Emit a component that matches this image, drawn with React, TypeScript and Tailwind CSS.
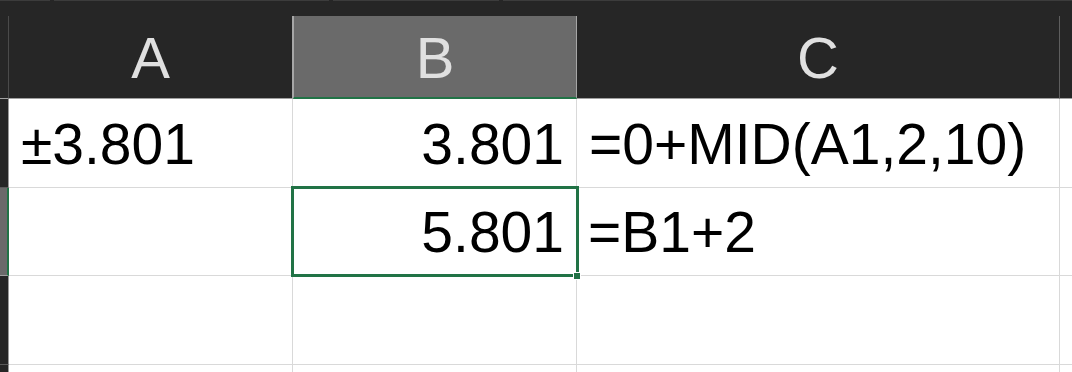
import React from "react";

const font = { fontFamily: '"Liberation Sans", Arial, sans-serif' };

const HeaderCell = ({
  label,
  selected,
  className = "",
}: {
  label: string;
  selected?: boolean;
  className?: string;
}) => (
  <div
    className={`flex items-center justify-center text-[58px] leading-none text-[#e0e0e0] border-b ${
      selected
        ? "bg-[#6a6a6a] border-b-2 border-b-[#217346] border-r border-r-[#a6a6a6] border-l border-l-[#a6a6a6] -ml-px"
        : "bg-[#262626] border-b-[#a0a0a0]"
    } ${className}`}
  >
    <span className="pt-[2px]">{label}</span>
  </div>
);

const Cell = ({
  children,
  align = "left",
  className = "",
}: {
  children?: React.ReactNode;
  align?: "left" | "right";
  className?: string;
}) => (
  <div
    className={`relative flex items-end px-3 pb-[14px] text-[57px] leading-none text-black bg-white border-r border-b border-[#d9d9d9] whitespace-nowrap ${
      align === "right" ? "justify-end" : "justify-start"
    } ${className}`}
  >
    {children}
  </div>
);

const RowHead = ({ selected }: { selected?: boolean }) => (
  <div
    className={`border-b ${
      selected
        ? "bg-[#6a6a6a] border-r-2 border-r-[#217346] border-b-[#a0a0a0]"
        : "bg-[#262626] border-r border-r-[#9a9a9a] border-b-[#5a5a5a]"
    }`}
  />
);

export default function App() {
  return (
    <div className="w-[1072px] h-[372px] overflow-hidden bg-white" style={font}>
      {/* strip above the headers */}
      <div className="h-[16px] bg-[#262626] flex">
        <div className="h-px w-[50px] bg-[#3c3c3c]" />
        <div className="h-px w-[4px]" />
        <div className="h-px w-[275px] bg-[#3c3c3c]" />
        <div className="h-px w-[4px]" />
        <div className="h-px w-[166px] bg-[#3c3c3c]" />
        <div className="h-px w-[4px]" />
        <div className="h-px flex-1 bg-[#3c3c3c]" />
      </div>

      <div className="grid grid-cols-[9px_284px_284px_483px_12px] grid-rows-[83px_89px_88px_89px_20px]">
        {/* column headers */}
        <div className="bg-[#262626] border-r border-r-[#4a4a4a] border-b border-b-[#a0a0a0]" />
        <HeaderCell label="A" className="border-r border-r-[#a6a6a6]" />
        <HeaderCell label="B" selected className="ml-0" />
        <HeaderCell label="C" className="border-r border-r-[#5e5e5e]" />
        <div className="bg-[#262626] border-b border-b-[#a0a0a0]" />

        {/* row 1 */}
        <RowHead />
        <Cell>±3.801</Cell>
        <Cell align="right">3.801</Cell>
        <Cell>=0+MID(A1,2,10)</Cell>
        <div className="bg-white border-b border-[#d9d9d9]" />

        {/* row 2 */}
        <RowHead selected />
        <Cell />
        <Cell align="right" className="z-10">
          5.801
          <div className="absolute -left-[2px] -top-[2px] w-[288px] h-[91px] border-[3px] border-[#217346] pointer-events-none" />
          <div className="absolute -right-[5px] -bottom-[5px] w-[8px] h-[8px] bg-[#217346] border border-white" />
        </Cell>
        <Cell className="pl-[11px]">=B1+2</Cell>
        <div className="bg-white border-b border-[#d9d9d9]" />

        {/* row 3 */}
        <RowHead />
        <Cell />
        <Cell />
        <Cell />
        <div className="bg-white border-b border-[#d9d9d9]" />

        {/* row 4 */}
        <RowHead />
        <Cell />
        <Cell />
        <Cell />
        <div className="bg-white" />
      </div>
    </div>
  );
}
